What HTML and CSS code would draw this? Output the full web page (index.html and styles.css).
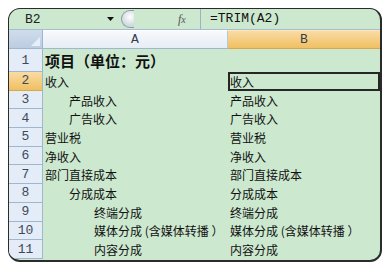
FILE: index.html
```html
<!DOCTYPE html>
<html lang="zh-CN">

<head>
  <meta charset="UTF-8">
  <meta name="viewport" content="width=device-width, initial-scale=1.0">
  <title>TRIM</title>

  <link rel="stylesheet" href="styles.css">
</head>

<body>
  <div class="window">
    <div class="formula-bar">
      <div class="name-box">B2</div>
      <svg class="name-arrow" width="7" height="4" viewBox="0 0 7 4">
        <path d="M0 0H7L3.5 4Z" fill="#111" />
      </svg>
      <div class="formula-input">
        <span class="knob"></span>
        <span class="fx">f<small>x</small></span>
        <span class="formula">=TRIM(A2)</span>
      </div>
    </div>

    <div class="sheet">
      <div class="corner"><span class="corner-tri"></span></div>
      <div class="col-head">A</div>
      <div class="col-head active">B</div>

      <div class="row-head">1</div>
      <div class="cell title">项目（单位：元）</div>
      <div class="cell"></div>

      <div class="row-head active">2</div>
      <div class="cell">收入</div>
      <div class="cell selected">收入</div>

      <div class="row-head">3</div>
      <div class="cell indent-1">产品收入</div>
      <div class="cell">产品收入</div>

      <div class="row-head">4</div>
      <div class="cell indent-1">广告收入</div>
      <div class="cell">广告收入</div>

      <div class="row-head">5</div>
      <div class="cell">营业税</div>
      <div class="cell">营业税</div>

      <div class="row-head">6</div>
      <div class="cell">净收入</div>
      <div class="cell">净收入</div>

      <div class="row-head">7</div>
      <div class="cell">部门直接成本</div>
      <div class="cell">部门直接成本</div>

      <div class="row-head">8</div>
      <div class="cell indent-1">分成成本</div>
      <div class="cell">分成成本</div>

      <div class="row-head">9</div>
      <div class="cell indent-2">终端分成</div>
      <div class="cell">终端分成</div>

      <div class="row-head">10</div>
      <div class="cell indent-2">媒体分成 (含媒体转播 ）</div>
      <div class="cell">媒体分成 (含媒体转播 ）</div>

      <div class="row-head">11</div>
      <div class="cell indent-2">内容分成</div>
      <div class="cell">内容分成</div>
    </div>
  </div>
</body>

</html>
```

FILE: styles.css
```css
body {
  margin: 0;
  background-color: #fff;
  font-family: "Noto Sans CJK SC", sans-serif;
}

.window {
  margin: 8px 0 0 8px;
  width: 374px;
  height: 254px;
  box-sizing: border-box;

  border: 1px solid #2b2b2b;
  border-right-width: 2px;
  border-bottom-width: 2px;
  border-radius: 12px;

  overflow: hidden;
  background-color: #cce8cf;
}

/* formula bar */

.formula-bar {
  display: flex;
  align-items: center;

  height: 20px;
  border-bottom: 1px solid #a7bcd3;
}

.name-box {
  width: 98px;
  padding-left: 16px;
  box-sizing: border-box;

  font-family: "Liberation Mono", monospace;
  font-size: 13px;
  color: #222;
}

.name-arrow {
  margin-left: 0;
}

.formula-input {
  display: flex;
  align-items: center;
  flex: 1;

  height: 20px;
  margin-left: 7px;
}

.knob {
  width: 13px;
  height: 18px;
  box-sizing: border-box;

  border: 1px solid #8f9ca8;
  border-right: none;
  border-radius: 10px 0 0 10px;

  background: radial-gradient(circle at 8px 6px, #fff 0, #eef2f4 3px, #cfd8dc 9px);
}

.fx {
  width: 22px;
  margin-left: 44px;

  font-family: "Liberation Serif", serif;
  font-style: italic;
  font-size: 12px;
  color: #555;
}

.fx small {
  font-size: 10px;
}

.formula {
  height: 20px;
  line-height: 20px;
  padding-left: 9px;
  border-left: 1px solid #9fb2c4;

  font-family: "Liberation Mono", monospace;
  font-size: 13px;
  color: #111;
}

/* sheet */

.sheet {
  display: grid;
  grid-template-columns: 34px 185px 1fr;
  grid-template-rows: 19px 23px repeat(10, 18.7px);
}

.corner {
  display: flex;
  justify-content: flex-end;
  align-items: flex-end;

  padding: 0 2px 2px 0;
  border-right: 1px solid #9eb6ce;
  border-bottom: 1px solid #9eb6ce;
  background: linear-gradient(#cfdcec, #bccde2);
}

.corner-tri {
  width: 0;
  height: 0;
  border-left: 9px solid transparent;
  border-bottom: 9px solid #e6eef7;
}

.col-head {
  display: flex;
  justify-content: center;
  align-items: center;

  border-top: 1px solid #fff;
  border-right: 1px solid #b7c8db;
  border-bottom: 1px solid #9eb6ce;
  background: linear-gradient(#f7f9fc, #e6edf5);

  font-family: "Liberation Mono", monospace;
  font-size: 13px;
  color: #333f4d;
}

.col-head.active {
  border-top-color: #fbe6bd;
  border-right: none;
  border-bottom-color: #d9a74e;
  background: linear-gradient(#f9dba4, #f0c062);
}

.row-head {
  display: flex;
  justify-content: center;
  align-items: center;

  border-right: 1px solid #9eb6ce;
  border-bottom: 1px solid #9eb6ce;
  background-color: #e4ecf7;

  font-family: "Liberation Mono", monospace;
  font-size: 13px;
  color: #3a4a5c;
}

.row-head.active {
  border-bottom-color: #d9a74e;
  background: linear-gradient(#f9dba4, #f0c062);
}

.cell {
  display: flex;
  align-items: center;

  padding-left: 2px;
  overflow: hidden;
  white-space: pre;

  font-size: 12px;
  color: #111;
}

.cell.title {
  font-size: 15px;
  font-weight: bold;
}

.cell.indent-1 {
  padding-left: 26px;
}

.cell.indent-2 {
  padding-left: 51px;
}

.cell.selected {
  box-shadow: inset 0 0 0 2px #262626;
}
```
